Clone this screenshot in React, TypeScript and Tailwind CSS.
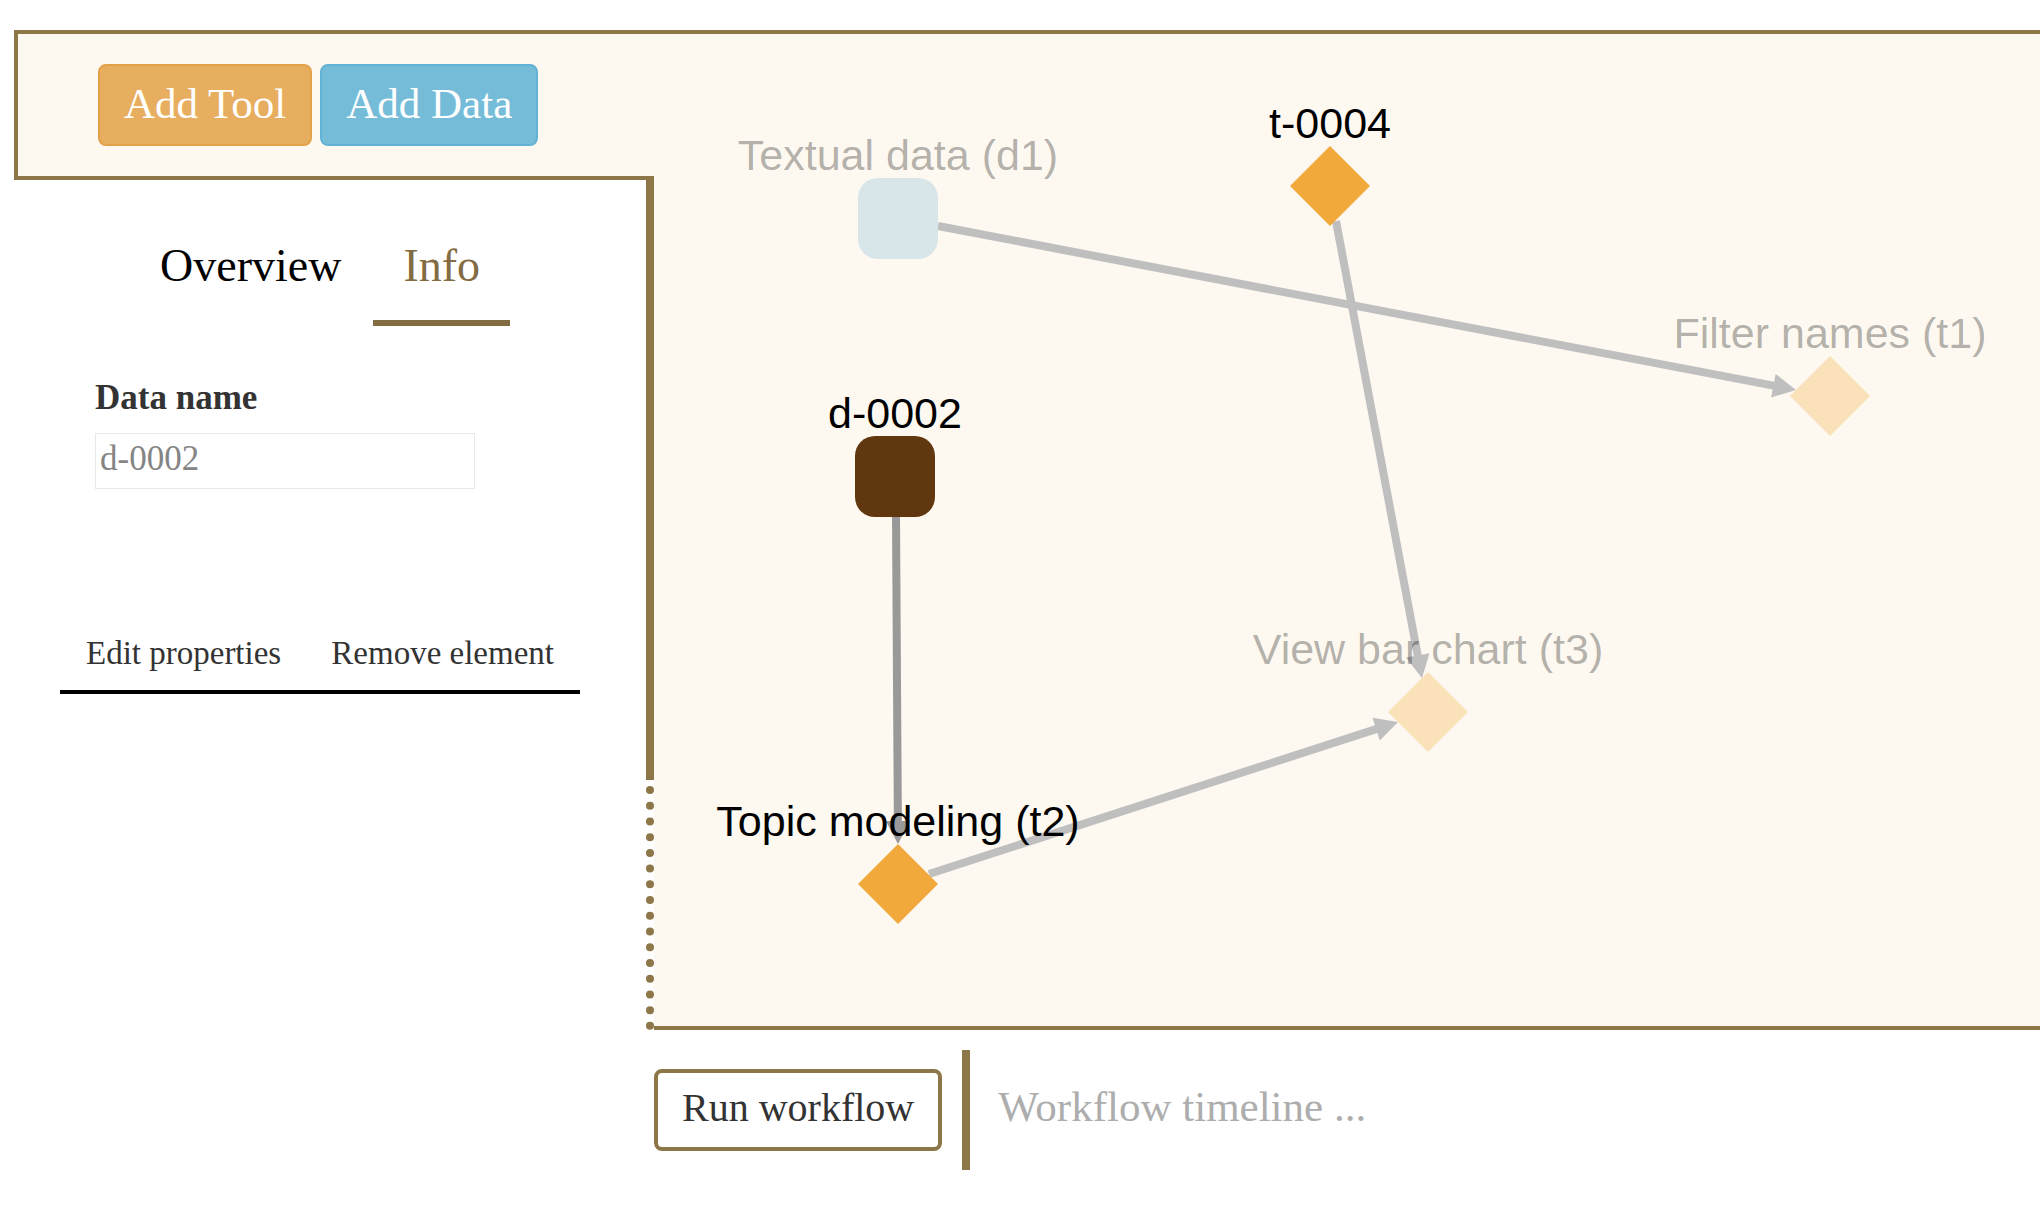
import { useState } from "react";

type WorkflowNode = {
  id: string;
  label: string;
  kind: "data" | "tool";
  x: number;
  y: number;
  fill: string;
  faded?: boolean;
};

type Edge = { id: string; x1: number; y1: number; x2: number; y2: number; color: string };

const nodes: WorkflowNode[] = [
  { id: "d1", label: "Textual data (d1)", kind: "data", x: 244, y: 184, fill: "#d8e6ea", faded: true },
  { id: "d-0002", label: "d-0002", kind: "data", x: 241, y: 442, fill: "#61370f" },
  { id: "t-0004", label: "t-0004", kind: "tool", x: 676, y: 152, fill: "#f2a93c" },
  { id: "t1", label: "Filter names (t1)", kind: "tool", x: 1176, y: 362, fill: "#fae1b9", faded: true },
  { id: "t2", label: "Topic modeling (t2)", kind: "tool", x: 244, y: 850, fill: "#f2a93c" },
  { id: "t3", label: "View bar chart (t3)", kind: "tool", x: 774, y: 678, fill: "#fae1b9", faded: true },
];

const edges: Edge[] = [
  { id: "d1-t1", x1: 284, y1: 192, x2: 1142, y2: 356, color: "#bfbfbf" },
  { id: "t4-t3", x1: 682, y1: 187, x2: 768, y2: 644, color: "#bfbfbf" },
  { id: "t2-t3", x1: 275, y1: 840, x2: 744, y2: 688, color: "#bfbfbf" },
  { id: "d2-t2", x1: 242, y1: 483, x2: 244, y2: 810, color: "#999999" },
];

function EdgeLine({ x1, y1, x2, y2, color }: Edge) {
  const length = Math.hypot(x2 - x1, y2 - y1);
  const angle = (Math.atan2(y2 - y1, x2 - x1) * 180) / Math.PI;
  return (
    <g transform={`translate(${x1} ${y1}) rotate(${angle})`} fill={color}>
      <path d={`M0 -4H${length - 23}V-12L${length} 0L${length - 23} 12V4H0Z`} />
    </g>
  );
}

function NodeShape({ node }: { node: WorkflowNode }) {
  const { x, y, fill, kind, label, faded } = node;
  return (
    <g>
      {kind === "data" ? (
        <rect x={x - 40} y={y - 40} width={80} height={81} rx={20} fill={fill} />
      ) : (
        <path d={`M${x} ${y - 40}l40 40l-40 40l-40 -40Z`} fill={fill} />
      )}
      <text x={x} y={y - 48} textAnchor="middle" fill="#000000" fillOpacity={faded ? 0.3 : 1}>
        {label}
      </text>
    </g>
  );
}

function WorkflowCanvas() {
  return (
    <section
      aria-label="Workflow graph"
      className="min-w-0 overflow-hidden border-y-4 border-[#8d7648] bg-[#fdf8f0]"
    >
      <svg
        className="block h-[992px] w-full font-['Liberation_Sans',Arial,sans-serif] text-[43px]"
        role="img"
        aria-label="Workflow"
      >
        {edges.map((edge) => (
          <EdgeLine key={edge.id} {...edge} />
        ))}
        {nodes.map((node) => (
          <NodeShape key={node.id} node={node} />
        ))}
      </svg>
    </section>
  );
}

function Sidebar() {
  const [tab, setTab] = useState("Info");
  const [name, setName] = useState("d-0002");
  return (
    <aside className="flex flex-col">
      <header className="flex h-[150px] items-center gap-2 border-y-4 border-l-4 border-[#8d7648] bg-[#fdf8f0] pl-20">
        <button className="h-[82px] rounded-lg border-2 border-[#e3a24a] bg-[#e7ae60] px-6 pb-1 text-[43px] leading-none text-white">
          Add Tool
        </button>
        <button className="h-[82px] rounded-lg border-2 border-[#62b2d5] bg-[#75bcd9] px-6 pb-1 text-[43px] leading-none text-white">
          Add Data
        </button>
      </header>

      <div className="min-h-[600px] border-r-8 border-[#8d7648]">
        <nav className="mt-14 flex gap-0.5 pl-[116px]">
          {["Overview", "Info"].map((item) => (
            <button
              key={item}
              onClick={() => setTab(item)}
              className={
                item === tab
                  ? "border-b-6 border-[#836b42] px-[30px] pb-6 text-[46px] leading-[60px] text-[#836b42]"
                  : "border-b-6 border-transparent px-[30px] pb-6 text-[46px] leading-[60px] text-black"
              }
            >
              {item}
            </button>
          ))}
        </nav>

        <form className="mt-[52px] pl-[81px]" onSubmit={(e) => e.preventDefault()}>
          <label htmlFor="data-name" className="block text-[35px] leading-10 font-bold text-[#333333]">
            Data name
          </label>
          <input
            id="data-name"
            type="text"
            value={name}
            onChange={(e) => setName(e.target.value)}
            className="mt-[15px] block h-14 w-[380px] border border-[#e8e8e8] bg-white px-1 pb-1 text-[35px] text-[#858585]"
          />
        </form>

        <div className="mt-36 mr-[66px] ml-[46px] flex justify-between border-b-4 border-black px-[26px] pb-[17px] text-[33px] leading-10 text-[#333333]">
          <button>Edit properties</button>
          <button>Remove element</button>
        </div>
      </div>

      <div className="mt-1.5 grow border-r-8 border-dotted border-[#8d7648]" />
    </aside>
  );
}

export default function App() {
  return (
    <main className="grid min-h-screen grid-cols-[640px_minmax(0,1fr)] content-start gap-y-5 bg-white pt-[30px] pl-3.5 font-['Liberation_Serif','Times_New_Roman',serif]">
      <Sidebar />
      <WorkflowCanvas />
      <footer className="col-start-2 flex h-[120px] items-center gap-5">
        <button className="h-[82px] rounded-lg border-4 border-[#8d7648] bg-white px-6 pb-1 text-[40px] leading-none whitespace-nowrap text-[#333333]">
          Run workflow
        </button>
        <p className="flex h-full items-center border-l-8 border-[#8d7648] pb-2 pl-7 text-[43px] leading-none text-[#adadad]">
          Workflow timeline ...
        </p>
      </footer>
    </main>
  );
}
